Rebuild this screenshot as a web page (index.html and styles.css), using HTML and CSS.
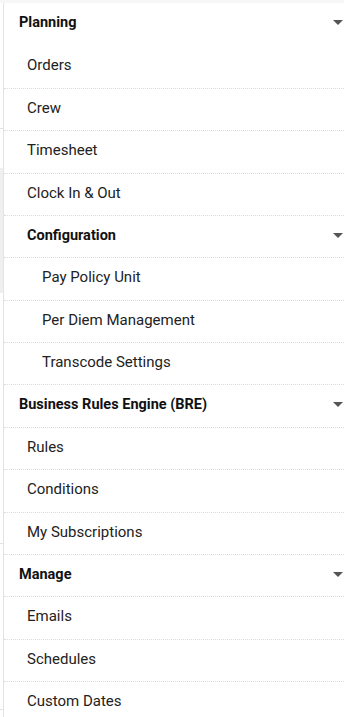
FILE: index.html
```html
<!DOCTYPE html>
<html lang="en">
<head>
<meta charset="UTF-8">
<meta name="viewport" content="width=device-width, initial-scale=1.0">
<title>Navigation Menu</title>
<link rel="stylesheet" href="styles.css">
</head>
<body>
<div class="topbar"></div>
<div class="layout">
    <div class="gutter">
        <div class="gutter-line gl-1"></div>
        <div class="gutter-fill"></div>
        <div class="gutter-line gl-2"></div>
        <div class="gutter-line gl-3"></div>
    </div>
    <nav class="panel">
        <ul class="menu">
            <li class="row head first">Planning <span class="caret"></span></li>
            <li class="row item plain">Orders</li>
            <li class="row item">Crew</li>
            <li class="row item">Timesheet</li>
            <li class="row item">Clock In &amp; Out</li>
            <li class="row subhead">Configuration <span class="caret"></span></li>
            <li class="row subitem">Pay Policy Unit</li>
            <li class="row subitem">Per Diem Management</li>
            <li class="row subitem">Transcode Settings</li>
            <li class="row head">Business Rules Engine (BRE) <span class="caret"></span></li>
            <li class="row item">Rules</li>
            <li class="row item">Conditions</li>
            <li class="row item">My Subscriptions</li>
            <li class="row head">Manage <span class="caret"></span></li>
            <li class="row item">Emails</li>
            <li class="row item">Schedules</li>
            <li class="row item">Custom Dates</li>
        </ul>
    </nav>
</div>
</body>
</html>
```

FILE: styles.css
```css
body {
    margin: 0;
    padding: 0;
    background-color: #fff;
    font-family: Roboto, "Liberation Sans", Arial, sans-serif;
    font-size: 15px;
    color: #222;
    overflow: hidden;
}

.topbar {
    height: 3px;
    background-color: #f7f7f7;
}

.layout {
    display: flex;
}

/* page content peeking out behind the panel */
.gutter {
    width: 3px;
    flex-shrink: 0;
    display: flex;
    flex-direction: column;
}

.gutter-line {
    height: 1px;
    background-color: #e2e2e2;
}

.gl-1 {
    margin-top: 125px;
}

.gutter-fill {
    margin-top: 39px;
    height: 125px;
    background-color: #efefef;
}

.gl-2 {
    margin-top: 250px;
}

.gl-3 {
    margin-top: 165px;
}

.panel {
    flex: 1;
    border-left: 1px solid #e3e3e3;
    background-color: #fff;
}

.menu {
    list-style: none;
    margin: 0;
    padding: 0;
}

.row {
    height: 42.375px;
    box-sizing: border-box;
    display: flex;
    align-items: center;
    padding-bottom: 3px;
    border-top: 1px dotted #dcdcdc;
}

.row.first,
.row.plain {
    border-top: none;
}

.head {
    padding-left: 15px;
    font-size: 14.5px;
    font-weight: bold;
    color: #111;
}

.subhead {
    padding-left: 23px;
    font-size: 14.5px;
    font-weight: bold;
    color: #111;
}

.item {
    padding-left: 23px;
}

.subitem {
    padding-left: 38px;
}

.caret {
    margin-left: auto;
    margin-right: 1px;
    width: 0;
    height: 0;
    border-left: 5px solid transparent;
    border-right: 5px solid transparent;
    border-top: 5px solid #555;
}
```
